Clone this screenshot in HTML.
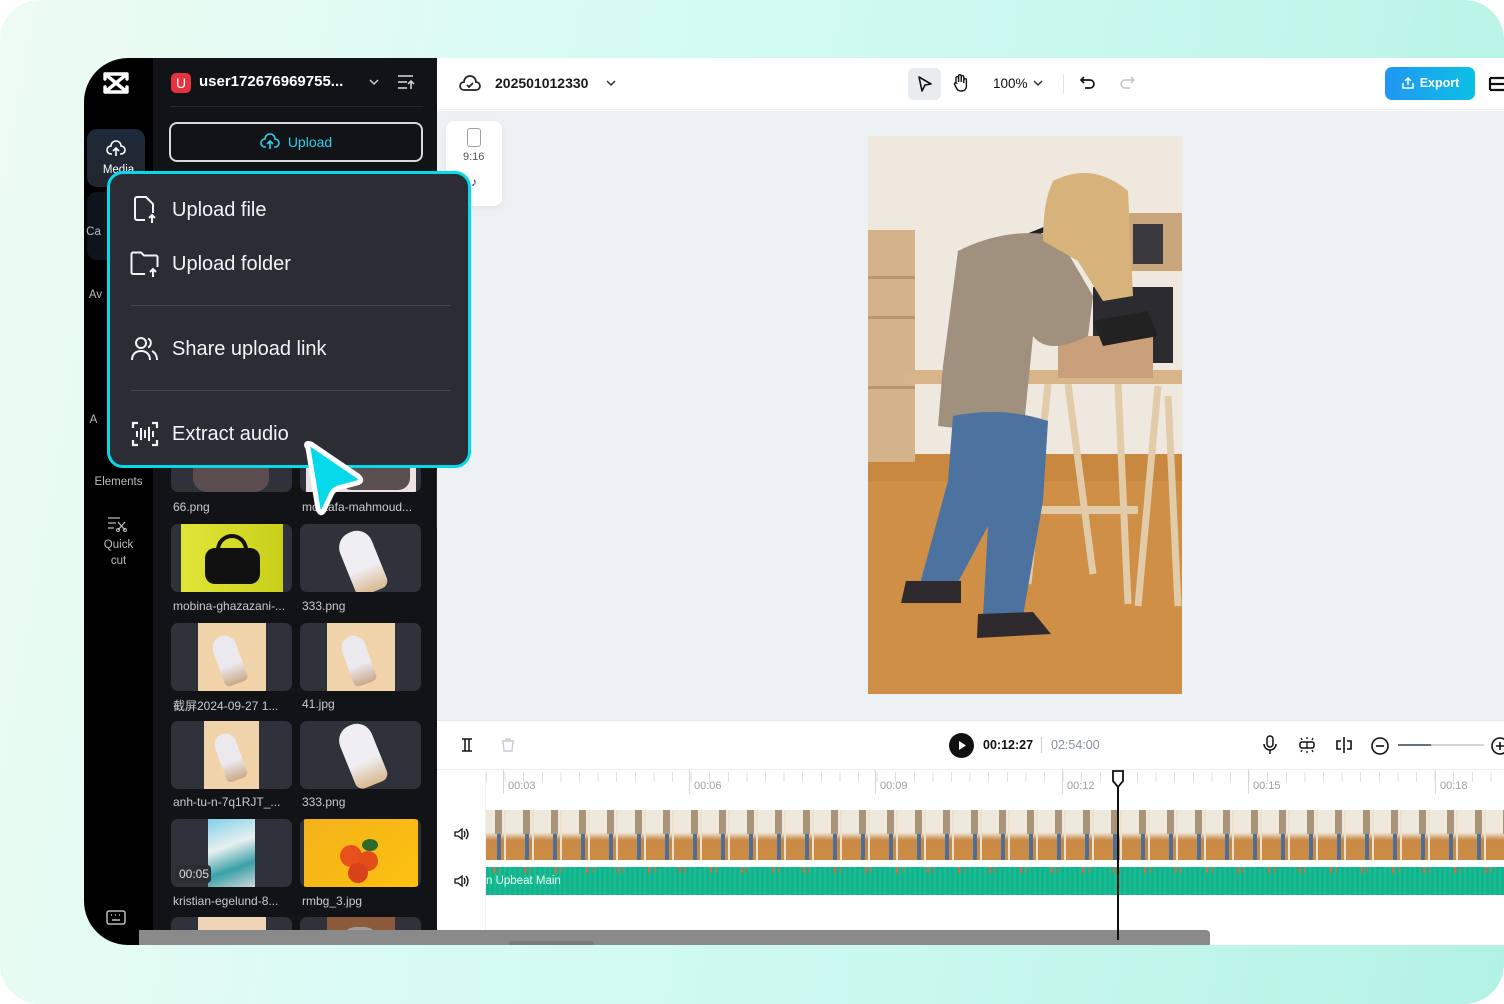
<!DOCTYPE html>
<html><head><meta charset="utf-8">
<style>
*{box-sizing:border-box;margin:0;padding:0}
body{width:1504px;height:1004px;overflow:hidden;background:#fff;font-family:"Liberation Sans","Noto Sans CJK SC",sans-serif;position:relative}
.bg{position:absolute;left:0;top:0;width:1504px;height:1004px;border-radius:40px;background:linear-gradient(100deg,#eefbf2 0%,#d4fbf4 40%,#c4f6ec 75%,#b2f2e4 100%)}
.app{position:absolute;left:84px;top:58px;width:1420px;height:887px;border-radius:44px 0 0 44px;overflow:hidden;background:#fff}
.nav{position:absolute;left:0;top:0;width:69px;height:887px;background:#000}
.panel{position:absolute;left:69px;top:0;width:284px;height:887px;background:#121316}
.abs{position:absolute}
.thumb{position:absolute;width:121px;height:68px;border-radius:7px;background:#2f323a;overflow:hidden}
.lbl{position:absolute;color:#c9cbd0;font-size:12px;white-space:nowrap}
.navl{position:absolute;width:69px;text-align:center;color:#b9bcc2;font-size:11.5px;line-height:16px}
.menu{position:absolute;left:107px;top:171px;width:364px;height:297px;background:#2b2c34;border:3px solid #06d9ea;border-radius:16px}
.mi{position:absolute;left:62px;color:#f2f3f5;font-size:20px}
.sep{position:absolute;left:21px;width:320px;height:1px;background:#45464e}
.tl{color:#9aa0a8;font-size:11px;position:absolute;top:779px}
</style></head><body>
<div class="bg"></div>
<div class="app">
  <div class="nav">
    <svg class="abs" style="left:18px;top:13px" width="28" height="24" viewBox="0 0 28 24"><path d="M3 3h22M3 21h22M3 3l22 18M25 3L3 21M3 3v5M25 3v5M3 21v-5M25 21v-5" stroke="#fff" stroke-width="3.4" fill="none" stroke-linecap="round"/></svg>
    <div class="abs" style="left:20px;top:104px;width:22px;height:2px;background:#333"></div>
    <div class="abs" style="left:3px;top:71px;width:58px;height:58px;border-radius:10px;background:linear-gradient(180deg,#1e2a3a,#23262d)"></div>
    <svg class="abs" style="left:22px;top:82px" width="20" height="18" viewBox="0 0 20 18"><path d="M6 14H5a4 4 0 0 1 0-8 5 5 0 0 1 10 0 4 4 0 0 1 0 8h-1M10 16V9M7 11l3-3 3 3" stroke="#fff" stroke-width="1.6" fill="none"/></svg>
    <div class="navl" style="top:104px;color:#fff">Media</div>
    <div class="abs" style="left:3px;top:134px;width:58px;height:68px;border-radius:10px;background:#0d141d"></div>
    <div class="navl" style="top:166px;left:-25px">Ca</div>
    <div class="navl" style="top:229px;left:-23px">Av</div>
    <div class="navl" style="top:354px;left:-25px">A</div>
    <div class="navl" style="top:416px;color:#b9bcc2">Elements</div>
    <svg class="abs" style="left:23px;top:458px" width="20" height="16" viewBox="0 0 20 16"><path d="M1 2h12M1 7h8M1 12h6M11 6l7 8M18 6l-7 8" stroke="#bbb" stroke-width="1.3" fill="none"/><circle cx="11" cy="14" r="1.5" fill="none" stroke="#bbb"/><circle cx="18" cy="14" r="1.5" fill="none" stroke="#bbb"/></svg>
    <div class="navl" style="top:479px">Quick<br>cut</div>
    <svg class="abs" style="left:22px;top:852px" width="20" height="16" viewBox="0 0 20 16"><rect x="1" y="1" width="18" height="13" rx="2" stroke="#bbb" stroke-width="1.5" fill="none"/><path d="M5 5h1M9 5h1M13 5h1M6 10h8" stroke="#bbb" stroke-width="1.5"/></svg>
  </div>
  <div class="panel">
    <div class="abs" style="left:18px;top:15px;width:20px;height:20px;border-radius:5px;background:#e8333f;color:#fff;font-size:14px;text-align:center;line-height:20px">U</div>
    <div class="abs" style="left:46px;top:15px;color:#fff;font-size:15px;font-weight:bold">user172676969755...</div>
    <svg class="abs" style="left:215px;top:19px" width="12" height="10"><path d="M2 3l4 4 4-4" stroke="#ccc" stroke-width="1.5" fill="none"/></svg>
    <svg class="abs" style="left:244px;top:16px" width="18" height="16"><path d="M1 2h15M1 8h9M1 14h9M14 15V7M11 10l3-3 3 3" stroke="#ddd" stroke-width="1.5" fill="none"/></svg>
    <div class="abs" style="left:17px;top:48px;width:253px;height:1px;background:#26272c"></div>
    <div class="abs" style="left:16px;top:64px;width:254px;height:40px;border:2px solid #d7d9de;border-radius:8px;color:#2fd0ec;font-size:14px;text-align:center;line-height:36px"><svg style="vertical-align:-4px;margin-right:8px" width="20" height="18" viewBox="0 0 20 18"><path d="M6 14H5a4 4 0 0 1 0-8 5 5 0 0 1 10 0 4 4 0 0 1 0 8h-1M10 16V9M7 11l3-3 3 3" stroke="#2fd0ec" stroke-width="1.6" fill="none"/></svg>Upload</div>
    <div class="thumb" style="left:18px;top:366px"><div class="abs" style="left:22px;top:0;width:76px;height:68px;background:#5b4d4f;border-radius:0 0 14px 14px"></div></div>
    <div class="thumb" style="left:147px;top:366px"><div class="abs" style="left:6px;top:0;width:110px;height:68px;background:#ece2e6"></div><div class="abs" style="left:40px;top:0;width:70px;height:66px;background:#5c4f52;border-radius:0 0 12px 12px"></div></div>
    <div class="lbl" style="left:20px;top:442px">66.png</div>
    <div class="lbl" style="left:149px;top:442px">mostafa-mahmoud...</div>

    <div class="thumb" style="left:18px;top:466px"><div class="abs" style="left:10px;top:0;width:102px;height:68px;background:linear-gradient(90deg,#e2e538,#c8d01a)"></div><div class="abs" style="left:34px;top:24px;width:55px;height:36px;border-radius:10px;background:#111"></div><div class="abs" style="left:45px;top:10px;width:32px;height:22px;border:4px solid #111;border-bottom:none;border-radius:16px 16px 0 0"></div></div>
    <div class="thumb" style="left:147px;top:466px"><div class="abs" style="left:45px;top:6px;width:34px;height:64px;border-radius:16px 16px 8px 8px;background:linear-gradient(180deg,#efeef2 60%,#d9b88e);transform:rotate(-22deg)"></div></div>
    <div class="lbl" style="left:20px;top:541px">mobina-ghazazani-...</div>
    <div class="lbl" style="left:149px;top:541px">333.png</div>

    <div class="thumb" style="left:18px;top:565px"><div class="abs" style="left:27px;top:0;width:68px;height:68px;background:#f1d3aa"></div><div class="abs" style="left:46px;top:12px;width:24px;height:50px;border-radius:12px 12px 5px 5px;background:linear-gradient(180deg,#ebe9ee 60%,#caa88a);transform:rotate(-20deg)"></div></div>
    <div class="thumb" style="left:147px;top:565px"><div class="abs" style="left:27px;top:0;width:68px;height:68px;background:#f1d3aa"></div><div class="abs" style="left:46px;top:12px;width:24px;height:50px;border-radius:12px 12px 5px 5px;background:linear-gradient(180deg,#ebe9ee 60%,#caa88a);transform:rotate(-20deg)"></div></div>
    <div class="lbl" style="left:20px;top:639px">截屏2024-09-27 1...</div>
    <div class="lbl" style="left:149px;top:639px">41.jpg</div>

    <div class="thumb" style="left:18px;top:663px"><div class="abs" style="left:33px;top:0;width:55px;height:68px;background:#f1d3aa"></div><div class="abs" style="left:48px;top:12px;width:22px;height:48px;border-radius:11px 11px 5px 5px;background:linear-gradient(180deg,#ebe9ee 60%,#caa88a);transform:rotate(-20deg)"></div></div>
    <div class="thumb" style="left:147px;top:663px"><div class="abs" style="left:45px;top:2px;width:34px;height:64px;border-radius:16px 16px 8px 8px;background:linear-gradient(180deg,#efeef2 60%,#d9b88e);transform:rotate(-22deg)"></div></div>
    <div class="lbl" style="left:20px;top:737px">anh-tu-n-7q1RJT_...</div>
    <div class="lbl" style="left:149px;top:737px">333.png</div>

    <div class="thumb" style="left:18px;top:761px"><div class="abs" style="left:37px;top:0;width:47px;height:68px;background:linear-gradient(160deg,#7fd0e8,#e8f0f0 40%,#3aa0a8 70%,#cfd8da)"></div><div class="abs" style="left:4px;top:46px;width:36px;height:18px;border-radius:4px;background:#2b2d33;color:#ddd;font-size:12px;line-height:18px;padding-left:4px">00:05</div></div>
    <div class="thumb" style="left:147px;top:761px"><div class="abs" style="left:4px;top:0;width:114px;height:68px;background:linear-gradient(135deg,#f4b21a,#fcc010)"></div><div class="abs" style="left:40px;top:26px;width:22px;height:22px;border-radius:50%;background:#e8501c"></div><div class="abs" style="left:58px;top:32px;width:20px;height:20px;border-radius:50%;background:#e34d18"></div><div class="abs" style="left:48px;top:44px;width:20px;height:20px;border-radius:50%;background:#d8421a"></div><div class="abs" style="left:62px;top:20px;width:16px;height:12px;border-radius:50%;background:#2b6a2a"></div></div>
    <div class="lbl" style="left:20px;top:836px">kristian-egelund-8...</div>
    <div class="lbl" style="left:149px;top:836px">rmbg_3.jpg</div>

    <div class="thumb" style="left:18px;top:859px"><div class="abs" style="left:27px;top:0;width:68px;height:68px;background:#eed5b8"></div></div>
    <div class="thumb" style="left:147px;top:859px"><div class="abs" style="left:27px;top:0;width:68px;height:68px;background:#8a5a3a"></div><div class="abs" style="left:40px;top:10px;width:40px;height:58px;border-radius:16px 16px 0 0;background:#9c9ea2"></div></div>
    <div class="abs" style="left:283px;top:412px;width:8px;height:58px;border-radius:0 6px 6px 0;background:#2a2b30"></div>
  </div>

  <!-- top bar -->
  <div class="abs" style="left:353px;top:0;width:1067px;height:52px;background:#fff;border-bottom:1px solid #eceef1"></div>
  <svg class="abs" style="left:375px;top:16px" width="22" height="18" viewBox="0 0 22 18"><path d="M6 16H5a4 4 0 0 1 0-8 6 6 0 0 1 12 0 4 4 0 0 1 0 8zM8 11l2 2 4-4" stroke="#222" stroke-width="1.7" fill="none"/></svg>
  <div class="abs" style="left:411px;top:17px;font-size:14px;font-weight:bold;color:#1a1a1a">202501012330</div>
  <svg class="abs" style="left:521px;top:20px" width="12" height="10"><path d="M2 3l4 4 4-4" stroke="#333" stroke-width="1.5" fill="none"/></svg>
  <div class="abs" style="left:824px;top:10px;width:33px;height:32px;border-radius:6px;background:#e9ecef"></div>
  <svg class="abs" style="left:832px;top:17px" width="18" height="18"><path d="M3 2l12 7-6 1-3 6z" stroke="#111" stroke-width="1.6" fill="none" stroke-linejoin="round"/></svg>
  <svg class="abs" style="left:866px;top:15px" width="20" height="20" viewBox="0 0 20 20"><path d="M6 10V5a1.3 1.3 0 0 1 2.6 0v4V3a1.3 1.3 0 0 1 2.6 0v6V4a1.3 1.3 0 0 1 2.6 0v6V7a1.3 1.3 0 0 1 2.6 0v6c0 3-2 5-5 5s-4-1-5-3l-2-4a1.2 1.2 0 0 1 2-1z" stroke="#111" stroke-width="1.4" fill="none"/></svg>
  <div class="abs" style="left:909px;top:18px;font-size:13.5px;color:#111">100%</div>
  <svg class="abs" style="left:948px;top:20px" width="12" height="10"><path d="M2 3l4 4 4-4" stroke="#333" stroke-width="1.5" fill="none"/></svg>
  <div class="abs" style="left:979px;top:16px;width:1px;height:20px;background:#e1e3e6"></div>
  <svg class="abs" style="left:995px;top:16px" width="18" height="18"><path d="M5 3L2 6l3 3M2 6h9a4 4 0 0 1 0 8H6" stroke="#111" stroke-width="1.7" fill="none"/></svg>
  <svg class="abs" style="left:1034px;top:16px" width="18" height="18"><path d="M13 3l3 3-3 3M16 6H7a4 4 0 0 0 0 8h5" stroke="#c8ccd2" stroke-width="1.7" fill="none"/></svg>
  <div class="abs" style="left:1301px;top:9px;width:90px;height:33px;border-radius:7px;background:linear-gradient(90deg,#2196f3,#0cc0e3);color:#fff;font-size:12.5px;font-weight:bold;line-height:33px;text-align:center"><svg style="vertical-align:-3px;margin-right:5px" width="14" height="14"><path d="M7 9V2M4 5l3-3 3 3M2 7v5h10V7" stroke="#fff" stroke-width="1.5" fill="none"/></svg>Export</div>
  <svg class="abs" style="left:1404px;top:16px" width="16" height="20"><path d="M2 4h14M2 10h14M2 16h14M2 4v12" stroke="#111" stroke-width="2.2" fill="none"/></svg>

  <!-- canvas -->
  <div class="abs" style="left:353px;top:53px;width:1067px;height:609px;background:#eef1f4"></div>
  <div class="abs" style="left:362px;top:63px;width:56px;height:85px;border-radius:8px;background:#fff;box-shadow:0 2px 6px rgba(0,0,0,.06)"></div>
  <div class="abs" style="left:383px;top:70px;width:14px;height:19px;border:1.5px solid #9aa0a8;border-radius:3px"></div>
  <div class="abs" style="left:379px;top:93px;font-size:11px;color:#555">9:16</div>
  <div class="abs" style="left:387px;top:117px;font-size:12px;color:#333">♪</div>

  <!-- video -->
  <svg class="abs" style="left:784px;top:78px" width="314" height="558" viewBox="0 0 314 558">
    <rect width="314" height="558" fill="#eee8de"/>
    <rect y="318" width="314" height="240" fill="#c98840"/>
    <rect y="345" width="314" height="213" fill="#d4944c" opacity=".6"/>
    <rect x="0" y="94" width="47" height="232" fill="#d4b28a"/>
    <rect x="0" y="140" width="47" height="3" fill="#b89670"/><rect x="0" y="180" width="47" height="3" fill="#b89670"/><rect x="0" y="250" width="47" height="3" fill="#b89670"/>
    <rect x="89" y="140" width="45" height="82" fill="#cfa77a"/>
    <rect x="259" y="77" width="55" height="58" fill="#c9a57c"/>
    <rect x="265" y="88" width="30" height="40" fill="#3a3a3e"/>
    <rect x="225" y="151" width="80" height="76" fill="#2c2c30"/>
    <path d="M125 158L160 100l20 -8" stroke="#222" stroke-width="5" fill="none"/>
    <rect x="35" y="234" width="279" height="14" fill="#d8b48a"/>
    <path d="M180 248l-20 200M200 248l25 190M250 248l10 220M290 250l-20 220M300 260l10 210" stroke="#e2cba8" stroke-width="7"/>
    <rect x="150" y="370" width="120" height="8" fill="#e2cba8"/>
    <rect x="190" y="200" width="95" height="42" fill="#c9a07a"/>
    <path d="M225 185l55 -10 10 25-55 10z" fill="#222"/>
    <path d="M90 115q50-25 100-15l35 60 -5 40q-40 20-55 0l-10 100 -85-10 5-60z" fill="#a0907e"/>
    <path d="M185 45q40-20 75 10l5 105-30 5-25-40-35-20q0-40 10-60z" fill="#d7b27a"/>
    <path d="M85 280q50-10 95 5l-5 80-20 115-40 0 5-90-40 75-30-10 30-110z" fill="#4c72a0"/>
    <path d="M38 445l55 0 0 22-60 0z" fill="#2e2a2e"/>
    <path d="M110 478l55-2 18 22-74 4z" fill="#2e2a2e"/>
  </svg>

  <!-- timeline -->
  <div class="abs" style="left:353px;top:662px;width:1067px;height:225px;background:#fff;border-top:1px solid #e6e8eb"></div>
  <div class="abs" style="left:353px;top:711px;width:1067px;height:1px;background:#eceef0"></div>
  <div class="abs" style="left:401px;top:712px;width:1px;height:175px;background:#f0f1f3"></div>
  <svg class="abs" style="left:376px;top:679px" width="14" height="16"><path d="M2 2h3v12H2M12 2H9v12h3M5 2h4M5 14h4" stroke="#111" stroke-width="1.5" fill="none"/></svg>
  <svg class="abs" style="left:416px;top:679px" width="16" height="16"><path d="M2 4h12M6 4V2h4v2M3 4l1 10h8l1-10" stroke="#c8ccd2" stroke-width="1.4" fill="none"/></svg>
  <div class="abs" style="left:865px;top:675px;width:25px;height:25px;border-radius:50%;background:#111"></div>
  <svg class="abs" style="left:874px;top:682px" width="10" height="11"><path d="M1 1l7 4.5L1 10z" fill="#fff"/></svg>
  <div class="abs" style="left:899px;top:680px;font-size:12.5px;font-weight:bold;color:#111">00:12:27</div>
  <div class="abs" style="left:957px;top:679px;width:1px;height:16px;background:#ccc"></div>
  <div class="abs" style="left:967px;top:680px;font-size:12.5px;color:#8a919a">02:54:00</div>
  <svg class="abs" style="left:1178px;top:677px" width="16" height="20"><rect x="5" y="1" width="6" height="11" rx="3" stroke="#111" stroke-width="1.5" fill="none"/><path d="M2 9a6 6 0 0 0 12 0M8 15v4" stroke="#111" stroke-width="1.5" fill="none"/></svg>
  <svg class="abs" style="left:1213px;top:678px" width="20" height="18"><rect x="3" y="6" width="14" height="6" rx="2" stroke="#111" stroke-width="1.5" fill="none"/><path d="M10 6v6M4 2l1 2M10 1v2M16 2l-1 2M4 16l1-2M10 17v-2M16 16l-1-2" stroke="#111" stroke-width="1.3"/></svg>
  <svg class="abs" style="left:1250px;top:678px" width="20" height="18"><path d="M10 1v16M7 5H3v8h4M13 5h4v8h-4" stroke="#111" stroke-width="1.6" fill="none"/></svg>
  <svg class="abs" style="left:1286px;top:678px" width="20" height="20"><circle cx="10" cy="10" r="8" stroke="#111" stroke-width="1.6" fill="none"/><path d="M6 10h8" stroke="#111" stroke-width="1.6"/></svg>
  <div class="abs" style="left:1314px;top:686px;width:86px;height:2px;background:#cfd3d8"></div>
  <div class="abs" style="left:1314px;top:686px;width:33px;height:2px;background:#6b737c"></div>
  <svg class="abs" style="left:1406px;top:678px" width="14" height="20"><circle cx="10" cy="10" r="8" stroke="#111" stroke-width="1.6" fill="none"/><path d="M6 10h8M10 6v8" stroke="#111" stroke-width="1.6"/></svg>

  <div class="abs" style="left:402px;top:714px;width:1018px;height:10px;background:repeating-linear-gradient(90deg,#dcdfe3 0 1px,transparent 1px 18.6px)"></div>
  <div class="abs" style="left:419px;top:712px;width:1px;height:24px;background:#d4d7db"></div>
  <div class="abs" style="left:605px;top:712px;width:1px;height:24px;background:#d4d7db"></div>
  <div class="abs" style="left:791px;top:712px;width:1px;height:24px;background:#d4d7db"></div>
  <div class="abs" style="left:978px;top:712px;width:1px;height:24px;background:#d4d7db"></div>
  <div class="abs" style="left:1164px;top:712px;width:1px;height:24px;background:#d4d7db"></div>
  <div class="abs" style="left:1351px;top:712px;width:1px;height:24px;background:#d4d7db"></div>
  <div class="tl" style="left:424px;top:722px">00:03</div>
  <div class="tl" style="left:610px;top:722px">00:06</div>
  <div class="tl" style="left:796px;top:722px">00:09</div>
  <div class="tl" style="left:983px;top:722px">00:12</div>
  <div class="tl" style="left:1169px;top:722px">00:15</div>
  <div class="tl" style="left:1356px;top:722px">00:18</div>

  <svg class="abs" style="left:369px;top:769px" width="16" height="14"><path d="M2 5h3l4-3v10l-4-3H2zM11 4q2 3 0 6M13 2q4 5 0 10" stroke="#111" stroke-width="1.3" fill="none"/></svg>
  <svg class="abs" style="left:369px;top:816px" width="16" height="14"><path d="M2 5h3l4-3v10l-4-3H2zM11 4q2 3 0 6M13 2q4 5 0 10" stroke="#111" stroke-width="1.3" fill="none"/></svg>

  <div class="abs" style="left:402px;top:752px;width:1018px;height:50px;background:
    repeating-linear-gradient(90deg,transparent 0 11px,#4c6f98 11px 15px,transparent 15px 28px),
    linear-gradient(180deg,#efe8dc 0 45%,#c78a45 60%,#cc8c44 100%)"></div>
  <div class="abs" style="left:402px;top:752px;width:1018px;height:24px;background:repeating-linear-gradient(90deg,transparent 0 9px,#a89478 9px 16px,transparent 16px 28px)"></div>
  <div class="abs" style="left:402px;top:752px;width:1018px;height:50px;background:repeating-linear-gradient(90deg,transparent 0 18px,#ece0cc 18px 20px,transparent 20px 28px)"></div>
  <div class="abs" style="left:402px;top:809px;width:1018px;height:28px;background:repeating-linear-gradient(90deg,#12b48c 0 3px,#1cbb93 3px 5px)"></div>
  <div class="abs" style="left:402px;top:809px;width:1018px;height:6px;background:repeating-linear-gradient(90deg,transparent 0 7px,#e0683a 7px 9px,transparent 9px 13px,#e0683a 13px 14px,transparent 14px 31px)"></div>
  <div class="abs" style="left:402px;top:817px;font-size:11.5px;color:#eafff7">n Upbeat Main</div>

  <!-- bottom scrollbar -->
  <div class="abs" style="left:55px;top:872px;width:1071px;height:15px;background:#8a8a8a;border-radius:0 4px 0 0"></div>
  <div class="abs" style="left:425px;top:883px;width:85px;height:4px;background:#7a7a7a;border-radius:2px"></div>

  <div class="abs" style="left:1033px;top:718px;width:2px;height:164px;background:#111"></div>
  <svg class="abs" style="left:1027px;top:711px" width="14" height="20"><path d="M2 2h10v10l-5 6-5-6z" fill="#fff" stroke="#111" stroke-width="1.8"/></svg>
</div>

<div class="menu">
  <svg class="abs" style="left:21px;top:21px" width="28" height="30" viewBox="0 0 28 30"><path d="M14 25H6a2 2 0 0 1-2-2V4a2 2 0 0 1 2-2h9l7 7v9" stroke="#f2f3f5" stroke-width="2" fill="none"/><path d="M21 28v-8M18 23l3-3 3 3" stroke="#f2f3f5" stroke-width="2" fill="none"/></svg>
  <div class="mi" style="top:25px">Upload file</div>
  <svg class="abs" style="left:19px;top:76px" width="32" height="28" viewBox="0 0 32 28"><path d="M16 24H4a1.5 1.5 0 0 1-1.5-1.5V4A1.5 1.5 0 0 1 4 2.5h8l3 3h12a1.5 1.5 0 0 1 1.5 1.5v10" stroke="#f2f3f5" stroke-width="2" fill="none"/><path d="M24 27v-8M21 22l3-3 3 3" stroke="#f2f3f5" stroke-width="2" fill="none"/></svg>
  <div class="mi" style="top:79px">Upload folder</div>
  <div class="sep" style="top:131px"></div>
  <svg class="abs" style="left:21px;top:162px" width="28" height="26" viewBox="0 0 28 26"><circle cx="10" cy="7" r="5" stroke="#f2f3f5" stroke-width="2" fill="none"/><path d="M1 24c0-6 4-9 9-9s9 3 9 9M17 2.5a5 5 0 0 1 0 9M21 15c3 1.5 5 4.5 5 9" stroke="#f2f3f5" stroke-width="2" fill="none"/></svg>
  <div class="mi" style="top:164px">Share upload link</div>
  <div class="sep" style="top:216px"></div>
  <svg class="abs" style="left:21px;top:246px" width="28" height="28" viewBox="0 0 28 28"><path d="M2 8V3h5M21 3h5v5M26 20v5h-5M7 25H2v-5" stroke="#f2f3f5" stroke-width="2.2" fill="none"/><path d="M6 11v6M10 8v12M14 10v8M18 7v14M22 11v6" stroke="#f2f3f5" stroke-width="2"/></svg>
  <div class="mi" style="top:249px">Extract audio</div>
</div>

<svg class="abs" style="left:296px;top:436px" width="76" height="84" viewBox="0 0 76 84"><path d="M12 12Q8 6 15 8L62 40Q68 45 61 47L42 52Q37 54 35 59L28 74Q25 80 22 73z" fill="#06d9ea" stroke="#fff" stroke-width="5" stroke-linejoin="round"/></svg>
</body></html>
